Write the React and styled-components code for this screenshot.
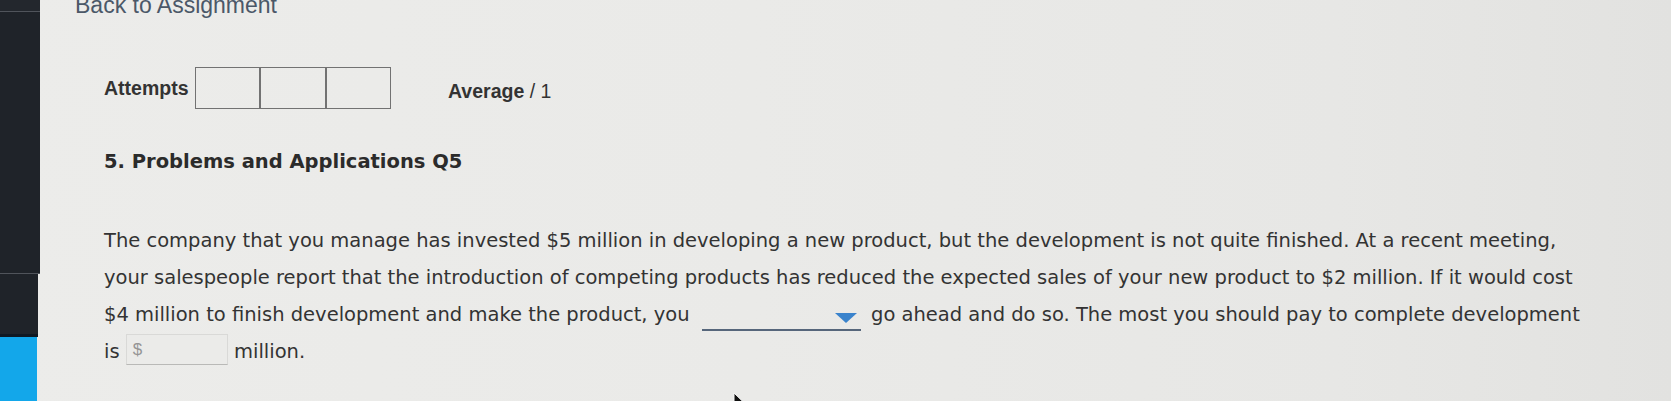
import React from 'react';
import styled, { createGlobalStyle } from 'styled-components';

const Global = createGlobalStyle`
  html, body { margin: 0; padding: 0; background: #e8e8e6; overflow: hidden; }
  * { box-sizing: border-box; }
`;

const Page = styled.div`
  display: flex;
  width: 1671px;
  height: 401px;
  overflow: hidden;
  background: linear-gradient(90deg, #ececea 0%, #eaeae8 45%, #e7e7e5 80%, #e2e2e0 100%);
`;

const Sidebar = styled.aside`
  flex: 0 0 40px;
  display: flex;
  flex-direction: column;
`;

const SideSection = styled.div`
  flex: 0 0 ${(p) => p.$h}px;
  width: ${(p) => p.$w || 40}px;
  background: ${(p) => p.$bg || '#1f2329'};
  border-bottom: ${(p) => p.$border || '1px solid #50545b'};
`;

const SideAccent = styled.div`
  flex: 1;
  width: 37px;
  background: #13a7ea;
`;

const Main = styled.main`
  position: relative;
  flex: 1;
  padding-left: 35px;
`;

const BackLink = styled.a`
  display: block;
  margin-top: -6.5px;
  font: 23px/23px "Liberation Sans", Arial, sans-serif;
  color: #4b5868;
  text-decoration: none;
`;

const Content = styled.div`
  padding-left: 29px;
`;

const AttemptsRow = styled.div`
  display: flex;
  align-items: center;
  height: 42px;
  margin-top: 50px;
`;

const Label = styled.span`
  font: bold 19.5px/24px "Liberation Sans", Arial, sans-serif;
  color: #333;
`;

const Light = styled.span`
  font-weight: normal;
`;

const Boxes = styled.div`
  display: flex;
  margin-left: 6px;
`;

const Box = styled.div`
  width: 65.5px;
  height: 42px;
  border: 1.5px solid #727272;
`;

const Average = styled(Label)`
  margin-left: 57px;
  margin-top: 7px;
`;

const Title = styled.h2`
  margin: 41px 0 0;
  font: bold 19.5px/24px "DejaVu Sans", Verdana, sans-serif;
  color: #2b2b2b;
`;

const Body = styled.p`
  margin: 48px 0 0;
  width: 1490px;
  font: 19.5px/37px "DejaVu Sans", Verdana, sans-serif;
  color: #333;
`;

const Dropdown = styled.span`
  display: inline-flex;
  justify-content: flex-end;
  align-items: flex-start;
  width: 159px;
  height: 21px;
  margin: 0 4px 0 6px;
  padding: 3px 4px 0 0;
  vertical-align: -2px;
  border-bottom: 2px solid #56667b;
`;

const InputBox = styled.span`
  display: inline-flex;
  align-items: center;
  width: 102px;
  height: 31px;
  padding-left: 6px;
  vertical-align: 3px;
  border: 1px solid #d9d9d7;
  border-bottom-color: #b9b9b7;
  background: #ebebe9;
  font: 17px "Liberation Sans", Arial, sans-serif;
  color: #959595;
`;

const Cursor = styled.svg`
  position: absolute;
  left: 693px;
  top: 392px;
`;

export default function App() {
  return (
    <>
      <Global />
      <Page>
        <Sidebar>
          <SideSection $h={12} $bg="#23272d" />
          <SideSection $h={262} />
          <SideSection $h={63} $w={38} $border="3px solid #0f1822" />
          <SideAccent />
        </Sidebar>
        <Main>
          <BackLink href="#">Back to Assignment</BackLink>
          <Content>
            <AttemptsRow>
              <Label>Attempts</Label>
              <Boxes>
                <Box />
                <Box />
                <Box />
              </Boxes>
              <Average>
                Average <Light>/ 1</Light>
              </Average>
            </AttemptsRow>
            <Title>5. Problems and Applications Q5</Title>
            <Body>
              The company that you manage has invested $5 million in developing a new product, but the
              development is not quite finished. At a recent meeting, your salespeople report that the
              introduction of competing products has reduced the expected sales of your new product to $2
              million. If it would cost $4 million to finish development and make the product, you{' '}
              <Dropdown>
                <svg width="22" height="10" viewBox="0 0 22 10">
                  <polygon points="0,0 22,0 11,10" fill="#3a83cc" />
                </svg>
              </Dropdown>{' '}
              go ahead and do so. The most you should pay to complete development is{' '}
              <InputBox>$</InputBox> million.
            </Body>
          </Content>
          <Cursor width="16" height="24" viewBox="0 0 16 24">
            <path d="M1 1 L1 19 L5.5 14.5 L9 22 L11.5 21 L8 13.5 L14 13.5 Z" fill="#111" stroke="#f4f4f4" strokeWidth="1" />
          </Cursor>
        </Main>
      </Page>
    </>
  );
}
